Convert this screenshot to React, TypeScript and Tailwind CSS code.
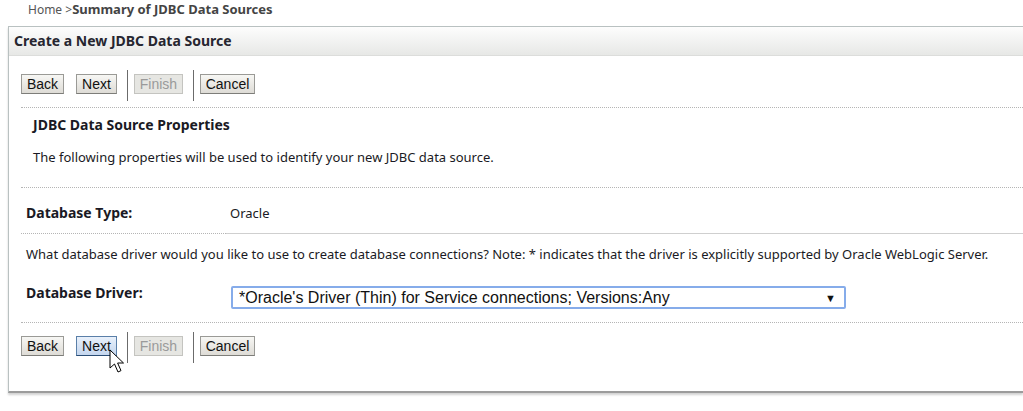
import React from "react";

const uiFont = { fontFamily: '"Noto Sans", "DejaVu Sans", sans-serif' };
const btnFont = { fontFamily: '"Liberation Sans", Arial, sans-serif' };

type BtnProps = {
  label: string;
  width: string;
  disabled?: boolean;
  hover?: boolean;
  children?: React.ReactNode;
};

const Btn = ({ label, width, disabled, hover, children }: BtnProps) => {
  let look =
    "border-[#9a9a96] border-b-[#7d7d79] bg-gradient-to-b from-[#f7f7f4] to-[#dedcd6] text-[#111]";
  if (disabled) look = "border-[#c4c4c0] bg-[#e6e6e2] text-[#9a9a9a]";
  if (hover)
    look =
      "border-[#5a7fa8] border-b-[#2b4d75] bg-gradient-to-b from-[#e9f1fb] to-[#c4d6ee] text-[#111]";
  return (
    <div className="relative">
      <div
        style={btnFont}
        className={`h-[20px] ${width} flex items-center justify-center border text-[14px] leading-[16px] ${look}`}
      >
        {label}
      </div>
      {children}
    </div>
  );
};

const Cursor = () => (
  <svg
    className="absolute left-[33px] top-[13px]"
    width="17"
    height="25"
    viewBox="0 0 17 25"
  >
    <path
      d="M1 1 L1 19 L5.5 15 L9 23 L12 21.6 L8.6 14 L14.5 14 Z"
      fill="#fff"
      stroke="#000"
      strokeWidth="1"
      strokeLinejoin="miter"
    />
  </svg>
);

const ButtonRow = ({ hoverNext }: { hoverNext?: boolean }) => (
  <div className="flex items-start h-[31px] pl-[12px]">
    <div className="flex items-center gap-[12px] pt-[4px]">
      <Btn label="Back" width="w-[43px]" />
      <Btn label="Next" width="w-[41px]" hover={hoverNext}>
        {hoverNext && <Cursor />}
      </Btn>
    </div>
    <div className="ml-[10px] w-px h-[31px] bg-[#6b6b6b]" />
    <div className="ml-[6px] pt-[4px]">
      <Btn label="Finish" width="w-[49px]" disabled />
    </div>
    <div className="ml-[10px] w-px h-[31px] bg-[#6b6b6b]" />
    <div className="ml-[6px] pt-[4px]">
      <Btn label="Cancel" width="w-[55px]" />
    </div>
  </div>
);

const Dotted = ({ mt }: { mt: string }) => (
  <div className={`${mt} ml-[12px] border-t border-dotted border-[#b5b5b5]`} />
);

export default function App() {
  return (
    <div
      style={uiFont}
      className="w-[1023px] h-[411px] overflow-hidden bg-white text-[13px] leading-[16px] text-[#1a1a24]"
    >
      <div className="h-[26px] pl-[28px] pt-[1px] text-[#555] text-[12px] leading-[16px]">
        Home &gt;<span className="font-bold text-[13px] text-[#444]">Summary of JDBC Data Sources</span>
      </div>

      <div className="ml-[8px] border-l border-t border-[#b9c1c1] border-b-2 border-b-[#9c9c9c] shadow-[0_2px_2px_rgba(0,0,0,0.18)] pb-[28px]">
        <div className="h-[29px] border-b border-[#dcdddb] bg-gradient-to-b from-[#fdfdfd] to-[#e7e8e6] flex items-center pl-[5px]">
          <span className="font-bold text-[14px] text-[#262630]">
            Create a New JDBC Data Source
          </span>
        </div>

        <div className="mt-[14px]">
          <ButtonRow />
        </div>

        <Dotted mt="mt-[6px]" />

        <div className="mt-[9px] pl-[24px] font-bold text-[14px]">JDBC Data Source Properties</div>
        <div className="mt-[16px] pl-[24px]">
          The following properties will be used to identify your new JDBC data source.
        </div>

        <Dotted mt="mt-[22px]" />

        <div className="mt-[17px] pl-[17px] flex">
          <div className="w-[204px] font-bold text-[14px]">Database Type:</div>
          <div>Oracle</div>
        </div>

        <div className="mt-[12px] ml-[12px] flex">
          <div className="w-[205px] border-t border-dotted border-[#b5b5b5]" />
          <div className="flex-1 border-t border-[#cfcfcf]" />
        </div>

        <div className="mt-[12px] pl-[17px]">
          What database driver would you like to use to create database connections? Note: *
          indicates that the driver is explicitly supported by Oracle WebLogic Server.
        </div>

        <div className="mt-[24px] pl-[17px] flex items-start">
          <div className="w-[205px] font-bold text-[14px] -mt-[1px]">Database Driver:</div>
          <div
            style={btnFont}
            className="w-[615px] h-[23px] border-2 border-[#86acea] rounded-[2px] flex items-center justify-between pl-[6px] pr-[8px] text-[16px] text-[#111]"
          >
            <span>*Oracle's Driver (Thin) for Service connections; Versions:Any</span>
            <span className="text-[11px]">▼</span>
          </div>
        </div>

        <Dotted mt="mt-[13px]" />

        <div className="mt-[9px]">
          <ButtonRow hoverNext />
        </div>
      </div>
    </div>
  );
}
